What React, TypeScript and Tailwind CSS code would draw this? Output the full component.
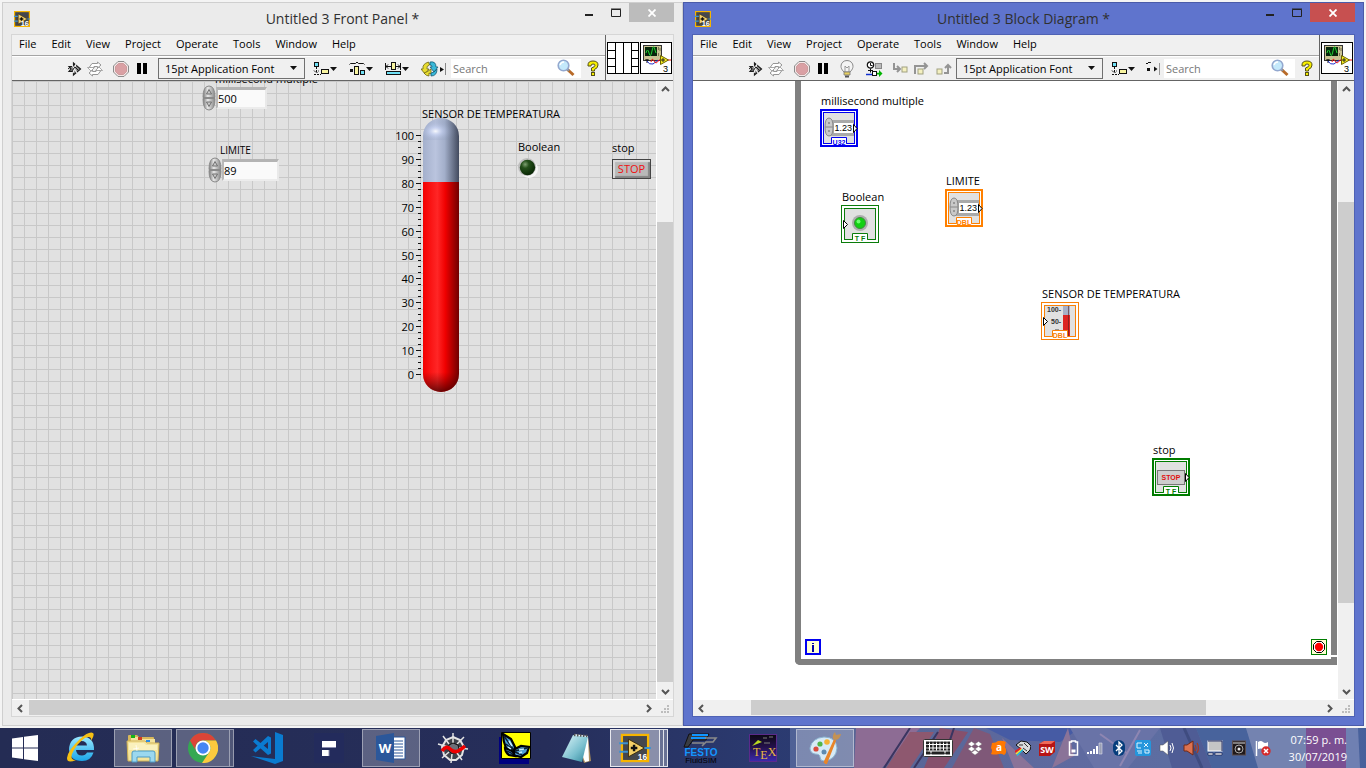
import React from 'react';
import type { ReactNode } from 'react';

const MENUS = ['File', 'Edit', 'View', 'Project', 'Operate', 'Tools', 'Window', 'Help'];

/* ---------- window icons ---------- */

function LabviewIcon({ size, className }: { size: number; className?: string }) {
  return (
    <svg width={size} height={size} viewBox="0 0 30 30" className={className}>
      <rect x="1" y="1" width="28" height="28" fill="#45474c" stroke="#f7b500" strokeWidth="2.4" />
      <path d="M-2 10h10M-2 19h10M22 15h10" stroke="#3d93cf" strokeWidth="2.2" />
      <path d="M8 5.500v19L25 15z" fill="#f5d068" stroke="#3a2c08" />
      <path d="M10.500 15h7M14 11.500v7" stroke="#111" strokeWidth="2.6" />
      <text x="28" y="27.500" textAnchor="end" fontSize={size > 20 ? 9 : 14} fontWeight="bold" fill="#fff" fontFamily="Liberation Sans, sans-serif">16</text>
    </svg>
  );
}

function RunIcon() {
  return (
    <svg width="16" height="18" viewBox="0 0 16 18">
      <path d="M2 6.500h4.500V3L13.500 9l-7 6v-3.500H2L4 9z" fill="#8e8e8e" stroke="#1c1c1c" strokeWidth="1.200" />
      <path d="M5 5l5 8M9 4l-3 9" stroke="#f0f0f0" strokeWidth="1.200" />
      <path d="M1 9l3-2.500M4 12l4-5 3 3" fill="none" stroke="#1c1c1c" />
    </svg>
  );
}

function RunLoopIcon() {
  return (
    <svg width="16" height="16" viewBox="0 0 16 16" fill="#fff" stroke="#969696">
      <path d="M2.500 6L5 2.500h5.500V1L14 4l-3.500 3V5.500H7L5.500 8z" />
      <path d="M13.500 10L11 13.500H5.500V15L2 12l3.500-3v1.500H9L10.500 8z" />
      <path d="M.5 6.500h7L4 10zM8.500 9.500h7L12 6z" strokeWidth=".8" />
    </svg>
  );
}

function AbortIcon() {
  return (
    <svg width="16" height="16" viewBox="0 0 16 16">
      <path d="M5 .5h6L15.500 5v6L11 15.500H5L.5 11V5z" fill="#f4e6e6" stroke="#8c8c8c" />
      <path d="M5.500 2.500h5l3 3v5l-3 3h-5l-3-3v-5z" fill="#daa0a4" stroke="#cc9a9c" />
    </svg>
  );
}

function PauseIcon() {
  return (
    <svg width="10" height="12" viewBox="0 0 10 12">
      <path d="M0 0h4v11H0zM6 0h4v11H6z" fill="#000" />
    </svg>
  );
}

function BulbIcon() {
  return (
    <svg width="14" height="18" viewBox="0 0 14 18">
      <path d="M4 12C1 9 1 7 1 6a6 5.500 0 0112 0c0 1 0 3-3 6z" fill="#f4f4f4" stroke="#888" />
      <path d="M5 12V6l2 2 2-2v6" fill="none" stroke="#999" />
      <path d="M4 12h6v3H4z" fill="#e8d060" stroke="#777" strokeWidth=".8" />
      <path d="M5 16.500h4" stroke="#555" strokeWidth="2" />
    </svg>
  );
}

function RetainIcon() {
  return (
    <svg width="18" height="16" viewBox="0 0 18 16">
      <circle cx="4.500" cy="4" r="3.200" fill="#fff" stroke="#111" strokeWidth="1.200" />
      <path d="M4.500 2v2.500h2M4.500 7.500v4M2 9.500h5" stroke="#111" fill="none" />
      <rect x="9.500" y="2.500" width="6" height="5" fill="#bbb" stroke="#888" />
      <path d="M0 13.500h6" stroke="#1030d0" strokeWidth="1.500" />
      <rect x="6.500" y="10.500" width="4" height="4" fill="#fff" stroke="#111" />
      <path d="M11 11.800h2V9l3.500 3.500L13 16v-2.500h-2z" fill="#00b400" />
    </svg>
  );
}

function StepIcon({ d, x, y }: { d: string; x: number; y: number }) {
  return (
    <svg width="16" height="14" viewBox="0 0 16 14">
      <path d={d} fill="none" stroke="#949494" strokeWidth="2" />
      <rect x={x} y={y} width="5" height="5" fill="#f4f0c0" stroke="#a0a080" />
    </svg>
  );
}

function DropTick() {
  return <path d="M17 6h7l-3.500 4z" fill="#111" />;
}

function AlignIcon() {
  return (
    <svg width="24" height="16" viewBox="0 0 24 16">
      <rect x="1.500" y="1.500" width="4" height="4" fill="#6fe0f5" stroke="#111" />
      <path d="M3.500 6v6M1 9.500l2.500 2.500L6 9.500M1 13.500h7" fill="none" stroke="#111" strokeDasharray="2 1" />
      <rect x="8.500" y="8.500" width="7" height="4" fill="#f8f4a0" stroke="#111" />
      <DropTick />
    </svg>
  );
}

function DistributeIcon() {
  return (
    <svg width="24" height="16" viewBox="0 0 24 16">
      <path d="M.5 3.500l1-1h5l1.500-1.500 1.500 1.500h5l1 1" fill="none" stroke="#111" />
      <rect x="1" y="8" width="3" height="3" fill="#111" />
      <rect x="5.500" y="5.500" width="4" height="8" fill="#f8f4a0" stroke="#111" />
      <rect x="11.500" y="9.500" width="4" height="4" fill="#6fe0f5" stroke="#111" />
      <DropTick />
    </svg>
  );
}

function ResizeIcon() {
  return (
    <svg width="24" height="16" viewBox="0 0 24 16">
      <path d="M.5 2v7M15.500 2v7M1 5.500h5M10 5.500h5M3 3.500L1 5.500l2 2M13 3.500l2 2-2 2" fill="none" stroke="#111" />
      <rect x="6.500" y="1.500" width="4" height="7" fill="#f8f4a0" stroke="#111" />
      <rect x="1.500" y="10.500" width="14" height="3" fill="#6fe0f5" stroke="#111" />
      <DropTick />
    </svg>
  );
}

function ReorderIcon() {
  return (
    <svg width="26" height="16" viewBox="0 0 26 16">
      <path d="M7.500 1Q1 3 2 8H0l4 5 4-5H6q-1-3 2.500-4z" fill="#e8dc30" stroke="#6b6410" strokeWidth=".8" />
      <path d="M3 12q2 3 5 3v-3l2 1V8L6.500 10.500z" fill="#e8dc30" stroke="#6b6410" strokeWidth=".8" />
      <path d="M9 1q6-1 6 5h2l-4 5-4-5h2q0-2-2-2z" fill="#38b8d8" stroke="#155a74" strokeWidth=".8" />
      <path d="M10 15q6 0 6-7l-3 3-3 1z" fill="#38b8d8" stroke="#155a74" strokeWidth=".8" />
      <path d="M19 6v5l4-2.500z" fill="#111" />
      <path d="M24.500 2v12" stroke="#888" />
    </svg>
  );
}

function OverflowDotsIcon() {
  return (
    <svg width="15" height="16" viewBox="0 0 15 16">
      <path d="M3 1.500h3M1 2.500h2" stroke="#111" />
      <path d="M2 7h3v3H2z" fill="#111" />
      <path d="M9 5.500v5l3.500-2.500z" fill="#111" />
      <path d="M14.500 2v12" stroke="#999" />
    </svg>
  );
}

function SearchIcon() {
  return (
    <svg width="18" height="18" viewBox="0 0 18 18">
      <path d="M10 10l6.500 6" stroke="#b86a28" strokeWidth="3" />
      <path d="M9.500 9.500l2.500 2.300" stroke="#8595a8" strokeWidth="2" />
      <circle cx="6.500" cy="6.500" r="5.300" fill="#c4e9fb" stroke="#93a8cf" strokeWidth="1.600" />
      <path d="M3 6q1-3 4-3" stroke="#fff" strokeWidth="1.500" fill="none" />
    </svg>
  );
}

function HelpIcon() {
  return (
    <svg width="12" height="17" viewBox="0 0 12 17">
      <path d="M1 5q0-4 5-4 5 0 5 4 0 3-3.500 4.500V11h-3V8Q8 7 8 5.200 8 4 6 4 4 4 4 6H1z" fill="#f6ee00" stroke="#555018" />
      <rect x="4.500" y="12.500" width="3" height="3" fill="#f6ee00" stroke="#555018" />
    </svg>
  );
}

function ConnectorPane() {
  return (
    <svg width="32" height="32" viewBox="0 0 32 32" fill="none" stroke="#000">
      <rect x=".5" y=".5" width="31" height="31" fill="#fff" />
      <path d="M8.500 0v32M16.500 0v32M24.500 0v32M1 8.500h7M1 16.500h7M1 24.500h7M25 8.500h7M25 16.500h7M25 24.500h7" />
    </svg>
  );
}

function ViIcon() {
  return (
    <svg width="32" height="32" viewBox="0 0 32 32">
      <rect x=".5" y=".5" width="31" height="31" fill="#fff" stroke="#000" />
      <rect x="3.500" y="3.500" width="18" height="15" fill="#c9c393" stroke="#333" />
      <rect x="5" y="5" width="12" height="9" fill="#06250b" />
      <path d="M6 11q1.500-6 3 0t3-2 3-1l1 3" fill="none" stroke="#20d030" />
      <path d="M18.500 5v3M20 6v3M18.500 11v3" stroke="#7a7550" />
      <path d="M7 17v4M5 18h4" stroke="#111" />
      <path d="M7 19q2 4 6 3l5-4" fill="none" stroke="#2030d0" />
      <path d="M11 20q1-5 3-1t5-1h2M27 18h4" fill="none" stroke="#f01010" />
      <path d="M20.500 13.500v9l8-4.500z" fill="#f8ee20" stroke="#6c6400" />
      <path d="M21 18h4M23 16v4" stroke="#222" />
      <text x="28" y="30" textAnchor="end" fontSize="9" fill="#000" fontFamily="Liberation Sans, sans-serif">3</text>
    </svg>
  );
}

/* ---------- scroll bars ---------- */

function Chevron({ d }: { d: string }) {
  return (
    <svg width="9" height="9" viewBox="0 0 9 9" fill="none" stroke="#555" strokeWidth="2">
      <path d={d} />
    </svg>
  );
}

function VScroll({ before, thumb, after }: { before: string; thumb: string; after: string }) {
  return (
    <div className="flex w-[17px] shrink-0 flex-col border-l border-white bg-[#f0f0f0]">
      <button aria-label="Scroll up" className="flex h-4 items-center justify-center"><Chevron d="M1 6l3.500-3.500L8 6" /></button>
      <div className={before} />
      <div className={`${thumb} bg-[#cdcdcd]`} />
      <div className={after} />
      <button aria-label="Scroll down" className="flex h-4 items-center justify-center"><Chevron d="M1 3l3.500 3.500L8 3" /></button>
    </div>
  );
}

function HScroll({ before, thumb, after }: { before: string; thumb: string; after: string }) {
  return (
    <div className="flex h-[17px] shrink-0 border-t border-white bg-[#f0f0f0]">
      <button aria-label="Scroll left" className="flex w-4 items-center justify-center"><Chevron d="M6 1L2.500 4.500 6 8" /></button>
      <div className={before} />
      <div className={`${thumb} h-[15px] bg-[#cdcdcd]`} />
      <div className={after} />
      <button aria-label="Scroll right" className="flex w-4 items-center justify-center"><Chevron d="M3 1l3.500 3.500L3 8" /></button>
      <svg width="17" height="16" viewBox="0 0 17 16" fill="#bdbdbd">
        <path d="M11 5h2v2h-2zM11 8h2v2h-2zM11 11h2v2h-2zM8 8h2v2H8zM8 11h2v2H8zM5 11h2v2H5z" />
      </svg>
    </div>
  );
}

/* ---------- window ---------- */

type WindowProps = {
  title: string;
  active?: boolean;
  debugTools?: ReactNode;
  arrangeTools: ReactNode;
  viPane: ReactNode;
  children: ReactNode;
};

function AppWindow({ title, active, debugTools, arrangeTools, viPane, children }: WindowProps) {
  const frame = active ? 'border-[#4a5ba9] bg-[#5f74cd]' : 'border-[#cfcfcf] bg-[#ebebeb]';
  const inner = active ? 'border-[#4f62b4]' : 'border-[#d6d6d6]';
  const close = active ? 'bg-[#c75050]' : 'bg-[#bcbcbc]';
  const fontGap = debugTools ? 'ml-1' : 'ml-[11px]';
  return (
    <section className={`flex min-w-0 flex-1 flex-col border px-2 pb-2 ${frame}`}>
      <header className="grid h-[31px] shrink-0 grid-cols-[1fr_auto_1fr]">
        <div className="flex items-center pl-[3px]"><LabviewIcon size={16} /></div>
        <h1 className="self-center text-[14px] leading-5 text-[#303030]">{title}</h1>
        <div className="flex h-[19px] justify-end">
          <button aria-label="Minimize" className="flex w-[27px] items-center justify-center pt-1"><svg width="8" height="2"><path d="M0 1h8" stroke="#222" strokeWidth="2" /></svg></button>
          <button aria-label="Maximize" className="flex w-[27px] items-center justify-center"><svg width="10" height="9"><path d="M.5 1.500h9v7h-9zM0 1h10" fill="none" stroke="#222" /></svg></button>
          <button aria-label="Close" className={`flex w-[45px] items-center justify-center ${close}`}><svg width="8" height="8"><path d="M.5.500l7 7M7.500.500l-7 7" stroke="#fff" strokeWidth="1.800" /></svg></button>
        </div>
      </header>
      <div className={`flex min-h-0 flex-1 flex-col border ${inner}`}>
        <div className="flex h-[46px] shrink-0 border-b border-[#646464] bg-[#f0f0f0]">
          <div className="flex min-w-0 flex-1 flex-col">
            <nav className="flex h-[21px] shrink-0 gap-[15px] border-b border-[#a5a5a5] pl-[7px]">
              {MENUS.map((m) => <button key={m} className="h-[18px] leading-[18px]">{m}</button>)}
            </nav>
            <div className="flex flex-1 items-center border-t border-white pl-[55px]">
              <button aria-label="Run"><RunIcon /></button>
              <button aria-label="Run continuously" className="ml-1"><RunLoopIcon /></button>
              <button aria-label="Abort" className="ml-2.5"><AbortIcon /></button>
              <button aria-label="Pause" className="ml-2"><PauseIcon /></button>
              {debugTools}
              <div className={`relative shrink-0 ${fontGap}`}>
                <select aria-label="Font" className="h-[21px] w-[147px] appearance-none border border-[#707070] bg-[#f0f0f0] pl-1.5 text-[11px] leading-4">
                  <option>15pt Application Font</option>
                </select>
                <svg width="7" height="4" className="pointer-events-none absolute top-2 right-2"><path d="M0 0h7L3.500 4z" fill="#111" /></svg>
              </div>
              {arrangeTools}
              <div className="relative ml-1 flex-1">
                <input type="search" aria-label="Search" placeholder="Search" className="block h-[19px] w-full bg-white pl-0.5 text-[11px] placeholder:text-[#777]" />
                <button aria-label="Start search" className="absolute top-0 right-1.5"><SearchIcon /></button>
              </div>
              <button aria-label="Context help" className="mx-1.5"><HelpIcon /></button>
            </div>
          </div>
          <div className="flex items-center gap-px border-l border-[#646464] px-px">{viPane}</div>
        </div>
        {children}
      </div>
    </section>
  );
}

/* ---------- front panel ---------- */

function Knob() {
  return (
    <svg width="14" height="26" viewBox="0 0 14 26">
      <defs>
        <linearGradient id="knob" x1="0" x2="1"><stop offset="0" stopColor="#777" /><stop offset=".4" stopColor="#e8e8e8" /><stop offset="1" stopColor="#858585" /></linearGradient>
      </defs>
      <path d="M1 12.500q0-11.500 6-11.500t6 11.500zM1 13.500q0 11.500 6 11.500t6-11.500z" fill="url(#knob)" stroke="#8a8a8a" />
      <path d="M4.500 9L7 4.500 9.500 9zM4.500 17L7 21.500 9.500 17z" fill="#c8c8c8" stroke="#666" strokeWidth=".9" />
    </svg>
  );
}

function NumericControl({ value, label, width, place }: { value: string; label: string; width: string; place: string }) {
  return (
    <div className={`absolute flex items-center ${place}`}>
      <Knob />
      <input aria-label={label} defaultValue={value} className={`${width} h-[22px] border-2 border-t-3 border-t-[#b4b4b4] border-r-[#e9e9e9] border-b-[#ececec] border-l-[#b9b9b9] bg-[#fafafa] text-[11px] leading-4`} />
    </div>
  );
}

function Thermometer() {
  return (
    <svg width="70" height="290" viewBox="0 0 70 290" className="absolute top-[29px] left-[378px]">
      <defs>
        <linearGradient id="glass" x1="0" x2="1"><stop offset="0" stopColor="#a4b0cc" /><stop offset=".35" stopColor="#bac4de" /><stop offset=".6" stopColor="#a3afca" /><stop offset="1" stopColor="#424a5e" /></linearGradient>
        <linearGradient id="fluid" x1="0" x2="1"><stop offset="0" stopColor="#f40000" /><stop offset=".4" stopColor="#ff2626" /><stop offset=".62" stopColor="#f00000" /><stop offset="1" stopColor="#700000" /></linearGradient>
        <radialGradient id="dome" cx=".35" cy=".6" r=".6"><stop offset="0" stopColor="#fff" stopOpacity=".9" /><stop offset=".3" stopColor="#d0dcff" stopOpacity=".45" /><stop offset="1" stopColor="#60708f" stopOpacity="0" /></radialGradient>
        <linearGradient id="foot" x1="0" x2="0" y1="0" y2="1"><stop offset="0" stopColor="#600" stopOpacity="0" /><stop offset="1" stopColor="#300" stopOpacity=".75" /></linearGradient>
      </defs>
      {Array.from({ length: 41 }, (_, i) => {
        const y = Math.round(25 + i * 5.975) + 0.5;
        return <path key={i} d={`M${i % 4 === 0 ? 26 : 28} ${y}H31`} stroke="#111" />;
      })}
      {Array.from({ length: 11 }, (_, i) => (
        <text key={i} x="24" y={Math.round(30 + i * 23.9)} textAnchor="end" fontSize="11" fill="#000">{100 - i * 10}</text>
      ))}
      <path d="M33 72V26a18 18 0 0136 0v46z" fill="url(#glass)" />
      <path d="M33 30V26a18 18 0 0136 0v4z" fill="url(#dome)" />
      <path d="M33 72h36v192a18 18 0 01-36 0z" fill="url(#fluid)" />
      <path d="M33 262h36v2a18 18 0 01-36 0z" fill="url(#foot)" />
    </svg>
  );
}

function FrontPanel() {
  return (
    <>
      <div className="flex min-h-0 flex-1">
        <div className="relative min-w-0 flex-1 overflow-hidden bg-[#e1e1e1] bg-[linear-gradient(to_right,#c8c8c8_1px,transparent_1px),linear-gradient(to_bottom,#c8c8c8_1px,transparent_1px)] bg-[size:12px_12px]">
          <span className="absolute -top-2.5 left-[203px] leading-4">millisecond multiple</span>
          <NumericControl label="millisecond multiple" value="500" width="w-[51px]" place="top-1 left-[190px]" />
          <span className="absolute top-[61px] left-[208px] text-[10px] leading-4">LIMITE</span>
          <NumericControl label="LIMITE" value="89" width="w-[57px]" place="top-[76px] left-[196px]" />
          <Thermometer />
          <span className="absolute top-[25px] left-[410px] leading-4">SENSOR DE TEMPERATURA</span>
          <span className="absolute top-[58px] left-[506px] leading-4">Boolean</span>
          <svg width="22" height="22" viewBox="0 0 22 22" className="absolute top-[76px] left-[505px]">
            <defs><radialGradient id="led" cx=".35" cy=".3" r=".7"><stop offset="0" stopColor="#7da070" /><stop offset=".35" stopColor="#24501a" /><stop offset="1" stopColor="#0a2806" /></radialGradient></defs>
            <circle cx="12" cy="12" r="9" fill="#f6f6f6" />
            <circle cx="10" cy="10" r="9" fill="#bdbdbd" />
            <circle cx="10.500" cy="10.500" r="7.700" fill="url(#led)" />
          </svg>
          <span className="absolute top-[59px] left-[600px] leading-4">stop</span>
          <button className="absolute top-[78px] left-[600px] h-5 w-[39px] border border-[#444] bg-[#b9b9b9] text-[11px] leading-4 text-[#f01010] shadow-[inset_2px_2px_1px_#dcdcdc,inset_-2px_-2px_1px_#858585]">STOP</button>
        </div>
        <VScroll before="flex-[125]" thumb="flex-[460]" after="flex-[1]" />
      </div>
      <HScroll before="flex-[1]" thumb="flex-[491]" after="flex-[120]" />
    </>
  );
}

/* ---------- block diagram ---------- */

function Terminal({ color, tag, control, place, children }: { color: string; tag: string; control?: boolean; place: string; children: ReactNode }) {
  return (
    <svg width="38" height="38" viewBox="0 0 38 38" className={`absolute ${place}`}>
      <rect width="38" height="38" fill={color} />
      <rect x={control ? 2 : 1} y={control ? 2 : 1} width={control ? 34 : 36} height={control ? 34 : 36} fill="#fff" />
      <rect x="3.500" y="3.500" width="31" height="31" fill="#e1e1e1" stroke={color} />
      {children}
      <path d="M11.500 34.500v-6h15v6" fill="#fff" stroke={color} />
      <path d="M12 35h14" stroke="#fff" strokeWidth="2" />
      <text x="19" y="35.500" textAnchor="middle" fontSize="7" fontWeight="bold" fill={color} fontFamily="Liberation Sans Narrow, Liberation Sans, sans-serif">{tag}</text>
      <path d={control ? 'M33.500 15.500v8l3.500-4z' : 'M2.500 15.500v8l4-4z'} fill="#fff" stroke="#000" />
    </svg>
  );
}

function NumericGlyph() {
  return (
    <g>
      <rect x="10" y="11" width="24" height="16" fill="#a9a9a9" />
      <rect x="14" y="14" width="19" height="10" fill="#fff" />
      <path d="M5 18q0-9 4-9t4 9-4 9-4-9zM5 18h8" fill="#c9c9c9" stroke="#888" />
      <path d="M8 14h2M8 22h2" stroke="#666" />
      <text x="14.500" y="22" fontSize="9" fill="#000" fontFamily="Liberation Sans Narrow, Liberation Sans, sans-serif">1.23</text>
    </g>
  );
}

function BlockDiagram() {
  return (
    <>
      <div className="flex min-h-0 flex-1">
        <div className="relative min-w-0 flex-1 overflow-hidden bg-white">
          <div className="absolute top-0 right-0 bottom-[34px] left-[102px] rounded-bl-[5px] border-6 border-t-0 border-[#808080]" />
          <div className="absolute right-0 bottom-[42px] h-0.5 w-1.5 bg-white" />
          <span className="absolute top-3 left-[128px] leading-4">millisecond multiple</span>
          <Terminal color="#0000f0" tag="U32" control place="top-7 left-[127px]"><NumericGlyph /></Terminal>
          <span className="absolute top-[108px] left-[149px] leading-4">Boolean</span>
          <Terminal color="#0a7c0a" tag="T F" place="top-[124px] left-[148px]">
            <circle cx="19" cy="18" r="8" fill="#adadad" />
            <circle cx="19" cy="18" r="5.500" fill="#12d012" stroke="#3c8f3c" />
            <circle cx="17.500" cy="16.500" r="2" fill="#6cff6c" />
          </Terminal>
          <span className="absolute top-[92px] left-[253px] leading-4">LIMITE</span>
          <Terminal color="#ff8000" tag="DBL" control place="top-[108px] left-[252px]"><NumericGlyph /></Terminal>
          <span className="absolute top-[205px] left-[349px] leading-4">SENSOR DE TEMPERATURA</span>
          <Terminal color="#f88008" tag="DBL" place="top-[221px] left-[348px]">
            <rect x="22" y="4" width="7" height="9" fill="#a6b0c8" />
            <rect x="22" y="13" width="7" height="21" fill="#dc2424" />
            <path d="M27.500 4v30" stroke="#5a2020" strokeOpacity=".6" />
            <g fontSize="7" fontWeight="bold" fill="#333" fontFamily="Liberation Sans, sans-serif">
              <text x="6" y="9.500">100-</text>
              <text x="10" y="21.500">50-</text>
            </g>
            <path d="M14 28h4" stroke="#444" />
          </Terminal>
          <span className="absolute top-[361px] left-[460px] leading-4">stop</span>
          <Terminal color="#007c00" tag="T F" control place="top-[377px] left-[459px]">
            <rect x="5.500" y="12.500" width="27" height="14" fill="#cdcdcd" stroke="#777" />
            <text x="19" y="22" textAnchor="middle" fontSize="7" fontWeight="bold" fill="#e01010" fontFamily="Liberation Sans, sans-serif">STOP</text>
          </Terminal>
          <svg width="16" height="16" viewBox="0 0 16 16" className="absolute bottom-11 left-[112px]">
            <rect x="1" y="1" width="14" height="14" fill="#ffffd2" stroke="#0000f0" strokeWidth="2" />
            <path d="M7 4h2v1H7zM7 6h2v7H7z" fill="#0000a8" />
          </svg>
          <svg width="16" height="16" viewBox="0 0 16 16" className="absolute right-2.5 bottom-11">
            <rect x=".5" y=".5" width="15" height="15" fill="#ffffd2" stroke="#007c00" />
            <path d="M5.500 2.500h5l3 3v5l-3 3h-5l-3-3v-5z" fill="#fff" stroke="#000" />
            <circle cx="8" cy="8" r="4.200" fill="#f00" />
          </svg>
        </div>
        <VScroll before="flex-[105]" thumb="flex-[402]" after="flex-[80]" />
      </div>
      <HScroll before="flex-[42]" thumb="flex-[455]" after="flex-[115]" />
    </>
  );
}

/* ---------- task bar ---------- */

function TaskButton({ label, state, stacked, children }: { label: string; state?: 'open' | 'active'; stacked?: boolean; children: ReactNode }) {
  const look = state === 'active' ? 'border border-white/80 bg-white/45' : state === 'open' ? 'border border-white/40 bg-white/25' : '';
  return (
    <div className="flex w-[58px] shrink-0">
      <button aria-label={label} className={`flex h-[38px] flex-1 items-center justify-center ${look}`}>{children}</button>
      {stacked && <div className={`h-[38px] w-1 border border-l-0 ${state === 'active' ? 'border-white/80 bg-white/30' : 'border-white/40 bg-white/20'}`} />}
      {stacked && state === 'active' && <div className="h-[38px] w-1 border border-l-0 border-white/80 bg-white/30" />}
    </div>
  );
}

function Wallpaper() {
  return (
    <svg viewBox="0 0 576 40" width="576" height="40" className="absolute top-0 right-0">
      <defs>
        <linearGradient id="wall" x1="0" x2="1"><stop offset="0" stopColor="#4f6196" /><stop offset=".12" stopColor="#576595" /><stop offset=".5" stopColor="#5f6aa0" /><stop offset=".8" stopColor="#5a70a2" /><stop offset="1" stopColor="#47609b" /></linearGradient>
      </defs>
      <rect width="576" height="40" fill="url(#wall)" />
      <path d="M66 0h64L92 40H64z" fill="#8d6c94" />
      <path d="M120 4L96 40h24l24-36z" fill="#8e586f" />
      <path d="M150 0l-16 40h20L178 4z" fill="#86506c" />
      <path d="M184 0l-22 40h52L200 6z" fill="#7f5878" />
      <path d="M120 0l-26 40M148 4l-24 36M164 0l-8 24" stroke="#3a3560" strokeWidth="2" fill="none" />
      <path d="M196 0h94l-20 14-50-2z" fill="#465ba4" />
      <path d="M212 10l32 30h-20zM262 40l16-40 6 28z" fill="#8a7398" />
      <path d="M280 0h90l-32 40h-34z" fill="#6973a7" />
      <path d="M310 6l28 20M350 2l-20 36" stroke="#8e86b2" strokeWidth="2" />
      <path d="M370 0h36l16 40h-40z" fill="#4f5c95" />
      <path d="M394 0l18 40" stroke="#3f4c80" strokeWidth="3" />
      <path d="M406 0h50l14 40h-48z" fill="#48639c" />
      <path d="M456 0h60v40h-48z" fill="#7483b0" />
      <path d="M516 0h40v40h-40z" fill="#7a4f92" />
      <path d="M556 0h12l2 40h-14z" fill="#6f80b2" />
    </svg>
  );
}

function TrayIcon({ label, children }: { label: string; children: ReactNode }) {
  return (
    <button aria-label={label} className="shrink-0">
      <svg width="16" height="16" viewBox="0 0 16 16">{children}</svg>
    </button>
  );
}

function Taskbar() {
  return (
    <footer className="relative flex h-10 shrink-0 items-center overflow-hidden bg-[linear-gradient(to_right,#242c54_0,#262e5a_40%,#2b3a70_56%,#344a84_100%)]">
      <Wallpaper />
      <div className="relative flex gap-1">
        <button aria-label="Start" className="flex w-[48px] items-center justify-center">
          <svg width="26" height="26" viewBox="0 0 26 26" fill="#fff" className="ml-0.5"><path d="M0 3.500L11 2v10.500H0zM12 1.800L26 0v12.500H12zM0 13.500h11V24L0 22.500zM12 13.500h14V26l-14-1.800z" /></svg>
        </button>
        <TaskButton label="Internet Explorer">
          <svg width="32" height="32" viewBox="0 0 32 32">
            <defs><linearGradient id="ie" x2="0" y2="1"><stop offset="0" stopColor="#9be9ff" /><stop offset="1" stopColor="#1aa5e8" /></linearGradient></defs>
            <path d="M29 18H11q.5 5.500 6 5.500 3.500 0 5-3h6.500Q26 29 17 29 5 29 4 17.500 4.500 5 17 4.500 29.500 5 29 18zM11 13.500h11q-.5-4.500-5.500-4.500T11 13.500z" fill="url(#ie)" />
            <path d="M26 9q4-6 2-8-4-2-13 6Q3 18 2 26q0 6 9 2-6 0-4-6Q11 12 20 6q7-3 6 3z" fill="#f6c013" />
          </svg>
        </TaskButton>
        <TaskButton label="File Explorer" state="open">
          <svg width="34" height="30" viewBox="0 0 34 30">
            <path d="M2 3q0-1 1-1h8l2 2h14q1 0 1 1v20H2z" fill="#d7b75a" />
            <path d="M5 4h8l2 2h14v4H5z" fill="#f3e39e" />
            <path d="M5 2h4v3H5z" fill="#16b416" /><path d="M12 4h4v3h-4z" fill="#d23c1e" /><path d="M20 7h4v2h-4z" fill="#2f8de0" />
            <path d="M1 8h18l2 2h12l-1 18H2z" fill="#f4e49c" stroke="#d0b256" />
            <path d="M3 10h15l2 2h11v5H3z" fill="#faf1bd" />
            <path d="M6 29v-9q0-2 2-2h19q2 0 2 2v9h-5v-5H11v5z" fill="#9bd8ef" stroke="#4c9bc4" />
            <path d="M10 12l1 6M7 16l6-1" stroke="#fff" strokeOpacity=".7" />
          </svg>
        </TaskButton>
        <TaskButton label="Chrome" state="open" stacked>
          <svg width="30" height="30" viewBox="0 0 30 30">
            <circle cx="15" cy="15" r="15" fill="#35a852" />
            <path d="M2 7.500A15 15 0 0128 7.500H15A7.500 7.500 0 008 18z" fill="#db4437" />
            <path d="M15 7.500h13A15 15 0 0114 30l7.500-11.300A7.500 7.500 0 0015 7.500z" fill="#fbca3e" />
            <circle cx="15" cy="15" r="7.500" fill="#fff" /><circle cx="15" cy="15" r="5.700" fill="#4486f4" />
          </svg>
        </TaskButton>
        <TaskButton label="Visual Studio Code">
          <svg width="32" height="32" viewBox="0 0 32 32" fill="#0a7bd0">
            <path d="M24 0l8 3v26l-8 3L0 24l24 3z" />
            <path d="M17 4l3 1.500v16L17 23 2 9.500 4.500 7 17 17V10L4.500 20.500 2 18z" />
          </svg>
        </TaskButton>
        <TaskButton label="F editor">
          <svg width="30" height="30" viewBox="0 0 30 30"><rect width="30" height="30" fill="#232b5c" /><path d="M8 8h14v6H8zM8 17h7v6H8z" fill="#fff" /><path d="M8 14.500h14M15 17v6" stroke="#8a8cae" /></svg>
        </TaskButton>
        <TaskButton label="Word" state="open">
          <svg width="30" height="30" viewBox="0 0 30 30"><path d="M16 4h13v22H16z" fill="#fff" stroke="#2b579a" /><path d="M18 8h9M18 11h9M18 14h9M18 17h9M18 20h9M18 23h9" stroke="#2b579a" /><path d="M0 3l18-3v30L0 27z" fill="#2b579a" /><text x="9" y="19.500" textAnchor="middle" fontSize="13" fontWeight="bold" fill="#fff">W</text></svg>
        </TaskButton>
        <TaskButton label="Spyder">
          <svg width="32" height="32" viewBox="0 0 32 32" fill="none" stroke="#e4e4e4">
            <path d="M16 5l7 3 4 7-2 8-6 5h-6l-6-5-2-8 4-7z" fill="#3e424b" strokeWidth="2" />
            <path d="M16 1v10M1 12l10 3M5 26l7-6M14 31l1-9M25 28l-5-7M31 17l-9-1M27 5l-7 7M6 4l6 8" strokeWidth="1.500" />
            <path d="M16 11l5 2 1 4-3 4h-5l-3-4 1-4z" fill="#6b6f78" stroke="#111" />
            <path d="M5 19q4-6 8-2t8 2 7-5" stroke="#f00000" strokeWidth="3.600" />
          </svg>
        </TaskButton>
        <TaskButton label="Butterfly">
          <svg width="32" height="32" viewBox="0 0 32 32">
            <path d="M0 5h30v27H0z" fill="#000080" /><path d="M2.500.500h29v26h-29z" fill="#ff0" stroke="#000" />
            <path d="M4 2l8 5 4 8-1 5-8-4q-3-7-3-14zM14 18l8-4 8 1-2 6-6 4-8-2zM6 16l8 3 2 5-6-1q-4-3-4-7z" fill="#4f9fd6" stroke="#000" strokeWidth="2.200" />
            <path d="M5 4l9 13M7 12l7 6M16 19l12-3M16 20l7 3M8 19l6 3" stroke="#0b1c30" strokeWidth="1.400" /><path d="M10 9l3 5M20 18l5-1M9 15l3 2M20 21l3-1" stroke="#c6eeff" strokeWidth="1.500" />
          </svg>
        </TaskButton>
        <TaskButton label="Notepad">
          <svg width="32" height="32" viewBox="0 0 32 32">
            <path d="M27 5l3 24-7 2-2-6z" fill="#a98d5c" /><path d="M13 2l14 2 1 25-4 1z" fill="#fff" />
            <defs><linearGradient id="note" x2="1" y2="1"><stop offset="0" stopColor="#e2f8fb" /><stop offset=".6" stopColor="#79bfce" /><stop offset="1" stopColor="#2d8499" /></linearGradient></defs>
            <path d="M12 3l15 2-6 25-20-5z" fill="url(#note)" /><path d="M13 3l14 1" stroke="#555" strokeWidth="2.500" strokeDasharray="1.500 1.500" />
          </svg>
        </TaskButton>
        <TaskButton label="LabVIEW" state="active" stacked><LabviewIcon size={28} className="overflow-visible" /></TaskButton>
        <TaskButton label="FluidSIM">
          <svg width="40" height="32" viewBox="0 0 40 32">
            <path d="M8 2h20l-3 6H12l-5 7H3z" fill="#3a3c42" stroke="#111" /><path d="M11 3h16M10 6h15" stroke="#1195ff" strokeWidth="1.800" /><path d="M24 6h11l-3 4h-7l-4 4M11 11h12" stroke="#8a8a8a" strokeWidth="1.600" fill="none" />
            <text x="20" y="24" textAnchor="middle" fontSize="10" fontWeight="bold" fill="#1496ff" fontFamily="Liberation Sans, sans-serif">FESTO</text>
            <text x="20" y="31" textAnchor="middle" fontSize="8" fill="#000" fontFamily="Liberation Sans, sans-serif">FluidSIM</text>
          </svg>
        </TaskButton>
        <TaskButton label="TeX">
          <svg width="28" height="28" viewBox="0 0 28 28">
            <defs><linearGradient id="tex" x2="0" y2="1"><stop offset="0" stopColor="#0b0814" /><stop offset=".45" stopColor="#24104a" /><stop offset="1" stopColor="#3b2aae" /></linearGradient></defs>
            <rect x=".5" y=".5" width="27" height="27" fill="url(#tex)" stroke="#5a2a8c" /><path d="M3 12l6-6 4 2z" fill="#b8d820" /><path d="M14 4h4M20 3h4M15 9h6" stroke="#7c7c7c" />
            <text fontFamily="Liberation Serif, serif" fontSize="12" fill="#e6b83e" x="4" y="22">T<tspan dy="3">E</tspan><tspan dy="-3">X</tspan></text>
          </svg>
        </TaskButton>
        <TaskButton label="Paint" state="open">
          <svg width="32" height="32" viewBox="0 0 32 32">
            <path d="M15 5q12 0 13 11-1 12-13 13-4 0-4-4 0-3-5-3-5-1-5-6Q3 6 15 5z" fill="#d7eaf6" stroke="#8bb4d1" /><circle cx="15" cy="20" r="2.500" fill="#5e8bb0" />
            <circle cx="7" cy="17" r="2.600" fill="#d84b3c" /><circle cx="11" cy="12" r="2.600" fill="#52b548" /><circle cx="18" cy="10" r="2.800" fill="#f4b234" />
            <path d="M26 8L17 31l-1-1z" fill="#e8852a" stroke="#e8852a" strokeWidth="2.500" /><path d="M24 7q-1-4 2-7l1 3 5-1q-1 5-5 6z" fill="#c39254" />
          </svg>
        </TaskButton>
      </div>
      <div className="relative ml-auto flex items-center gap-2 pr-[19px] text-white">
        <button aria-label="Touch keyboard" className="mr-1.5">
          <svg width="30" height="18" viewBox="0 0 30 18"><rect x=".5" y=".5" width="29" height="17" rx="1" fill="#fff" stroke="#333" /><path d="M3 2.500h24v13H3z" fill="#222" /><path d="M3 5.500h24M3 9h24M3 12h24M6.500 2.500v9M10 2.500v9M13.500 2.500v9M17 2.500v9M20.500 2.500v9M24 2.500v9M8 12v4M22 12v4" stroke="#fff" /><path d="M4 3.500h22v11H4z" fill="none" stroke="#222" strokeWidth=".6" /></svg>
        </button>
        <TrayIcon label="Dropbox"><path d="M4.500 1.500L8 4 4.500 6.500 1 4zM11.500 1.500L15 4l-3.500 2.500L8 4zM4.500 6.500L8 9l-3.500 2.500L1 9zM11.500 6.500L15 9l-3.500 2.500L8 9zM8 10l3.500 2.500L8 15l-3.500-2.500z" fill="#fff" stroke="#777" strokeWidth=".4" /></TrayIcon>
        <TrayIcon label="Antivirus"><path d="M1 3q4 0 6-2 4-1 8 1-2 4 0 7 1 4-2 6-3-2-5-1-5 1-8 0 2-4 0-6z" fill="#ff7800" /><text x="8" y="11" textAnchor="middle" fontSize="10" fontWeight="bold" fill="#fff">a</text></TrayIcon>
        <TrayIcon label="Image tool"><path d="M1 5l5-4 6 1 4 4-1 4-4 4-5-5z" fill="#dcdcdc" stroke="#111" /><path d="M4 5h4M9 3l4 4M8 8l4 3" stroke="#333" /><path d="M0 12l6-4" stroke="#e82020" strokeWidth="2" /><path d="M1 14l6-5" stroke="#ffe030" strokeWidth="1.500" /><path d="M2 15.500l6-6" stroke="#20c0e0" strokeWidth="1.500" /></TrayIcon>
        <TrayIcon label="SolidWorks"><path d="M0 4l5-3h11v11l-5 4H0z" fill="#b71515" /><path d="M0 4l5-3h11l-4 3z" fill="#ef6a5a" /><text x="8" y="13" textAnchor="middle" fontSize="9" fontWeight="bold" fill="#fff">SW</text></TrayIcon>
        <TrayIcon label="Battery"><path d="M8.500 2V1h4v1h2v13h-8V2z" fill="none" stroke="#fff" strokeWidth="1.500" /><path d="M8.500 9.500h4v3h-4z" fill="#fff" /></TrayIcon>
        <TrayIcon label="Network"><path d="M0 12h2v2H0zM3 11h2v3H3zM6 9h2v5H6zM9 6h2v8H9z" fill="#fff" /><path d="M12 3h3v11h-3z" fill="#999fb4" stroke="#dde" strokeWidth=".6" /></TrayIcon>
        <TrayIcon label="Bluetooth"><rect x="2" width="12" height="16" rx="6" fill="#063d7c" /><path d="M5 5l6 6-3 3V2l3 3-6 6" fill="none" stroke="#fff" strokeWidth="1.300" /></TrayIcon>
        <TrayIcon label="Graphics"><rect width="16" height="16" rx="2" fill="#2496dc" /><path d="M2 3h5M2 3v5h4M9 3l4 4M13 3L9 7M2 11h5M3 13h4M10 9v4h4v-3h-3" stroke="#dff5ff" fill="none" /></TrayIcon>
        <TrayIcon label="Volume"><path d="M1 5h3l5-4v14l-5-4H1z" fill="#fff" stroke="#555" strokeWidth=".5" /><path d="M11 5q2 3 0 6M13 3q3 5 0 10" stroke="#fff" fill="none" /></TrayIcon>
        <TrayIcon label="Audio manager"><path d="M1 5h3l6-4v14l-6-4H1z" fill="#dc7250" stroke="#742814" /><path d="M12 5q2 3 0 6M14 3q3 5 0 10" stroke="#a33d24" fill="none" strokeWidth="1.300" /></TrayIcon>
        <TrayIcon label="Display"><rect x="1" y="1" width="14" height="10" fill="#c5c5c5" stroke="#fff" /><path d="M1 1h14v10" fill="none" stroke="#182052" /><path d="M1 13h5v2H1zM8 13h7v2H8z" fill="#fff" stroke="#182052" strokeWidth=".7" /></TrayIcon>
        <TrayIcon label="Recorder"><rect x="1.500" y="1" width="13" height="14" fill="#201a1c" stroke="#5b4c4c" /><path d="M2 3h12" stroke="#ddd" /><circle cx="8" cy="9" r="4" fill="none" stroke="#aaa" /><circle cx="8" cy="9" r="1.500" fill="#eee" /></TrayIcon>
        <TrayIcon label="Action center"><path d="M1.500 1v15" stroke="#fff" strokeWidth="1.500" /><path d="M3 2q3-2 5 0t5 0v7q-3 1-5 0T3 9z" fill="#fff" /><circle cx="11" cy="11" r="4.700" fill="#d52b2b" /><path d="M9 9l4 4M13 9l-4 4" stroke="#fff" strokeWidth="1.500" /></TrayIcon>
        <div className="ml-2.5 flex flex-col items-end text-[11px] leading-[17px]">
          <time>07:59 p. m.</time>
          <time>30/07/2019</time>
        </div>
      </div>
    </footer>
  );
}

export default function App() {
  return (
    <div className="flex h-screen min-h-[480px] flex-col overflow-hidden bg-[#f4f4f4] font-['Open_Sans','Noto_Sans',sans-serif] text-[11px] text-black">
      <main className="flex min-h-0 flex-1 px-0.5 pt-0.5 pb-0.5">
        <AppWindow
          title="Untitled 3 Front Panel *"
          arrangeTools={
            <>
              <button aria-label="Align" className="ml-2"><AlignIcon /></button>
              <button aria-label="Distribute" className="ml-3"><DistributeIcon /></button>
              <button aria-label="Resize" className="ml-3"><ResizeIcon /></button>
              <button aria-label="Reorder" className="ml-3"><ReorderIcon /></button>
            </>
          }
          viPane={<><ConnectorPane /><ViIcon /></>}
        >
          <FrontPanel />
        </AppWindow>
        <AppWindow
          title="Untitled 3 Block Diagram *"
          active
          debugTools={
            <div className="ml-3 flex items-center gap-2">
              <button aria-label="Highlight execution"><BulbIcon /></button>
              <button aria-label="Retain wire values" className="ml-1"><RetainIcon /></button>
              <button aria-label="Step into"><StepIcon d="M2 1v6h6M5 4l3 3-3 3" x={10} y={5} /></button>
              <button aria-label="Step over" className="-ml-0.5"><StepIcon d="M1 12V4h12M10 1l3 3-3 3" x={4} y={7} /></button>
              <button aria-label="Step out" className="-ml-0.5"><StepIcon d="M8 11h4V3M9 6l3-3 3 3" x={1} y={7} /></button>
            </div>
          }
          arrangeTools={
            <>
              <button aria-label="Align" className="ml-2"><AlignIcon /></button>
              <button aria-label="More tools" className="ml-2.5"><OverflowDotsIcon /></button>
            </>
          }
          viPane={<ViIcon />}
        >
          <BlockDiagram />
        </AppWindow>
      </main>
      <Taskbar />
    </div>
  );
}
